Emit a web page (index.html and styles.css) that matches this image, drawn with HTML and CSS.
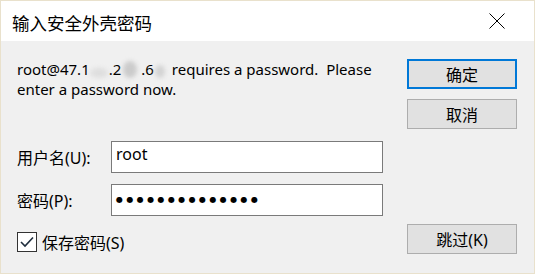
FILE: index.html
```html
<!DOCTYPE html>
<html lang="zh-CN">
<head>
    <meta charset="UTF-8">
    <title>输入安全外壳密码</title>
    <link rel="stylesheet" href="styles.css">
</head>
<body>
    <div class="dialog">
        <div class="title-bar">
            <span class="title">输入安全外壳密码</span>
            <svg class="close" width="16" height="16" viewBox="0 0 16 16">
                <path d="M0.5 0.5 L15.5 15.5 M15.5 0.5 L0.5 15.5" stroke="#000" stroke-width="1" fill="none"/>
            </svg>
        </div>

        <div class="content">
            <div class="main">
                <div class="message">
                    <div>root@47.1<span class="blur b1"></span>.2<span class="blur b2"></span>.6<span class="blur b3"></span> requires a password.&nbsp; Please</div>
                    <div>enter a password now.</div>
                </div>

                <div class="field">
                    <label>用户名(U):</label>
                    <div class="input">root</div>
                </div>
                <div class="field">
                    <label>密码(P):</label>
                    <div class="input dots">●●●●●●●●●●●●●●</div>
                </div>

                <div class="check-row">
                    <span class="checkbox">
                        <svg width="14" height="12" viewBox="0 0 14 12">
                            <path d="M1 6 L5 10 L13 1.5" stroke="#1f2d3d" stroke-width="1.6" fill="none"/>
                        </svg>
                    </span>
                    <span>保存密码(S)</span>
                </div>
            </div>

            <div class="buttons">
                <div class="btn primary">确定</div>
                <div class="btn">取消</div>
                <div class="btn skip">跳过(K)</div>
            </div>
        </div>
    </div>
</body>
</html>
```

FILE: styles.css
```css
body {
    margin: 0;
    font-family: 'Noto Sans', 'Noto Sans CJK SC', sans-serif;
    color: #000;
}

.dialog {
    width: 535px;
    height: 274px;
    box-sizing: border-box;
    border: 1px solid #e9e1cc;
    background: #f0f0f0;
    display: flex;
    flex-direction: column;
}

.title-bar {
    height: 44px;
    background: #fff;
    display: flex;
    align-items: center;
    justify-content: space-between;
    padding: 0 29px 0 11px;
}

.title {
    font-family: 'Noto Sans CJK SC', sans-serif;
    font-size: 17.5px;
    margin-top: 2px;
}

.close {
    display: block;
}

.content {
    flex: 1;
    display: flex;
    padding: 18px 16px 19px 16px;
    gap: 24px;
}

.main {
    width: 366px;
}

.message {
    margin: 0 0 42px;
    font-size: 15px;
    line-height: 20px;
    white-space: nowrap;
}

/* smudged part of the host address */
.blur {
    display: inline-block;
    vertical-align: -3px;
    border-radius: 50%;
    filter: blur(2px);
}

.b1 {
    width: 18px;
    height: 10px;
    margin-right: 1px;
    background: #dedede;
}

.b2 {
    width: 14px;
    height: 17px;
    margin: 0 4px 0 2px;
    background: #cbcbcb;
}

.b3 {
    width: 10px;
    height: 13px;
    margin: 0 3px 0 1px;
    background: #d3d3d3;
}

.field {
    display: flex;
    align-items: center;
    margin-bottom: 11px;
    font-size: 15px;
}

.field label {
    width: 94px;
    font-size: 16px;
}

.input {
    width: 272px;
    height: 32px;
    box-sizing: border-box;
    border: 1px solid #7a7a7a;
    background: #fff;
    padding: 0 4px;
    font-size: 16px;
    line-height: 24px;
}

.dots {
    font-family: 'DejaVu Sans', sans-serif;
    font-size: 8px;
    letter-spacing: 3.4px;
    line-height: 30px;
}

.check-row {
    display: flex;
    align-items: center;
    gap: 5px;
    margin-top: 14px;
    font-size: 16px;
}

.checkbox {
    width: 20px;
    height: 20px;
    box-sizing: border-box;
    border: 1px solid #333;
    background: #fff;
    display: flex;
    align-items: center;
    justify-content: center;
}

.buttons {
    width: 110px;
    display: flex;
    flex-direction: column;
    gap: 10px;
}

.btn {
    height: 30px;
    box-sizing: border-box;
    border: 1px solid #adadad;
    background: #e1e1e1;
    display: flex;
    align-items: center;
    justify-content: center;
    font-size: 16px;
}

.btn.primary {
    border: 2px solid #0078d7;
}

.btn.skip {
    margin-top: auto;
}
```
